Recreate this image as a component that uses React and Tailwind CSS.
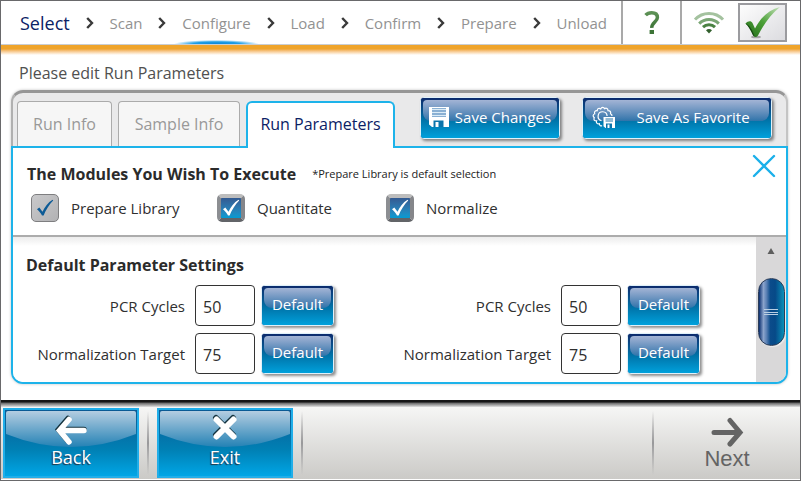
import React from "react";

const steps = [
  { name: "Select", look: "text-[18px] text-[#0b2265]" },
  { name: "Scan", look: "text-[15px] text-[#929292]" },
  { name: "Configure", look: "text-[15px] text-[#929292]", current: true },
  { name: "Load", look: "text-[15px] text-[#929292]" },
  { name: "Confirm", look: "text-[15px] text-[#929292]" },
  { name: "Prepare", look: "text-[15px] text-[#929292]" },
  { name: "Unload", look: "text-[15px] text-[#929292]" },
];

function Chevron() {
  return (
    <svg width="8" height="12" viewBox="0 0 8 12" fill="none" stroke="#3a3a3a" strokeWidth="2.4" aria-hidden="true">
      <path d="M1.2 1l4.8 5-4.8 5" />
    </svg>
  );
}

function Header() {
  return (
    <header>
      <div className="flex h-11 border-b border-[#c9ced4]">
        <nav className="flex-1">
          <ol className="flex h-full items-center justify-between pl-[19px] pr-3.5">
            {steps.map((step, i) => (
              <React.Fragment key={step.name}>
                {i > 0 && (
                  <li aria-hidden="true">
                    <Chevron />
                  </li>
                )}
                <li className="relative flex h-full items-center pt-0.5">
                  <a href="#" aria-current={step.current ? "step" : undefined} className={step.look}>
                    {step.name}
                  </a>
                  {step.current && (
                    <span className="absolute -inset-x-2 bottom-0 h-1 bg-[radial-gradient(50%_100%_at_bottom,#0c86d6_0%,#1f9fe6_55%,transparent_100%)]" />
                  )}
                </li>
              </React.Fragment>
            ))}
          </ol>
        </nav>
        <button type="button" aria-label="Help" className="flex w-[59px] items-center justify-center border-l-2 border-[#a9a9a9]">
          <svg width="16" height="24" viewBox="0 0 16 24" fill="none" aria-hidden="true">
            <defs>
              <linearGradient id="help" x1="0" y1="0" x2="0" y2="1">
                <stop offset="0" stopColor="#5d9155" />
                <stop offset="1" stopColor="#3d7437" />
              </linearGradient>
            </defs>
            <path d="M1.6 4.2C3.400 2.200 5.400 1.800 7.700 1.800c3.500 0 5.700 1.800 5.700 4.700 0 4.400-5.800 5-5.600 10.400" stroke="url(#help)" strokeWidth="3.500" />
            <rect x="5.600" y="19" width="4.400" height="4" fill="#3d7437" />
          </svg>
        </button>
        <div className="flex w-[120px] items-center border-l-2 border-[#a9a9a9] pl-3">
          <svg width="30" height="22" viewBox="0 0 30 22" fill="none" role="img" aria-label="Wireless signal">
            <path d="M1 7.600C8.500-0.500 21.500-0.500 29 7.600" stroke="#a4c29f" strokeWidth="3" />
            <path d="M5.200 11.600c5.400-5.500 14.200-5.500 19.600 0" stroke="#7aa674" strokeWidth="3" />
            <path d="M9 15.200c3.300-3.200 8.700-3.200 12 0" stroke="#4a8243" strokeWidth="3" />
            <path d="M12 18.200c1.700-1.500 4.300-1.500 6 0l-3 3.400z" fill="#315f2c" />
          </svg>
          <button
            type="button"
            aria-label="Status OK"
            className="ml-3.5 flex h-[39px] w-[49px] items-center justify-center border-2 border-[#9b9b9f] bg-linear-to-br from-[#fdfdfd] to-[#dcdce0]"
          >
            <svg width="37" height="33" viewBox="0 0 37 33" aria-hidden="true">
              <defs>
                <linearGradient id="tick" x1="0" y1="1" x2="1" y2="0">
                  <stop offset="0" stopColor="#236b18" />
                  <stop offset=".5" stopColor="#4ba038" />
                  <stop offset="1" stopColor="#c3e0b8" />
                </linearGradient>
              </defs>
              <ellipse cx="12" cy="31" rx="5" ry="1.300" fill="#777" opacity=".6" />
              <path d="M1.500 17.500C4 15 7 14.500 8.500 17l2.500 5.500C16 12.500 24 4 36 1 27 8 19.500 18.500 14 29.500c-1.500 2-3.500 2-4.500 0C7 24 5 20 1.500 17.500z" fill="url(#tick)" />
              <path d="M1.500 17.500C5 18.500 8 23 10.500 30c-1 0-1.500-.5-2-1.500C6.500 24 4.500 20.500 1.500 17.500z" fill="#174a12" />
            </svg>
          </button>
        </div>
      </div>
      <div className="h-2.5 bg-linear-to-b from-[#efa42b] from-40% to-white" />
    </header>
  );
}

function BlueButton({ children, className }) {
  return (
    <button
      type="button"
      className={
        "rounded-sm border border-[#dff1fa] bg-[#0c2a6c] text-white shadow-[2px_2px_3px_rgba(0,0,0,0.45)] " + className
      }
    >
      {children}
    </button>
  );
}

function GlossyFace({ children }) {
  return (
    <span className="grid h-full w-full rounded-xs bg-linear-to-b from-[#0c2a6c] via-[#0073a8] via-55% to-[#00a1dc] px-px pt-0.5">
      <span className="[grid-area:1/1] mx-px h-[54%] rounded-t-sm rounded-b-lg bg-linear-to-b from-[#a3b4d5] to-[#2e74aa]" />
      <span className="[grid-area:1/1] z-10 flex items-center justify-center pb-1">{children}</span>
    </span>
  );
}

function FloppyIcon() {
  return (
    <svg width="20" height="20" viewBox="0 0 20 20" aria-hidden="true">
      <path d="M0 0h20v20H3l-3-2.500z" fill="#fff" />
      <rect x="3" y="1" width="14" height="9" fill="#6f9dc7" />
      <path d="M3 2.500h14M3 5.500h14M3 8.500h14" stroke="#dcecf7" strokeWidth="1.300" />
      <path d="M4.500 13.500h10V20h-10z" fill="#0b74ab" />
      <path d="M6.500 15h3v5h-3z" fill="#fff" />
    </svg>
  );
}

function GearFloppyIcon() {
  return (
    <svg width="24" height="24" viewBox="0 0 24 24" fill="none" aria-hidden="true">
      <path
        d="M10 20.500c-1 .8-2.500.2-2.600-1.800-1.800.7-3.600-.6-2.800-2.800C2.500 16 1.200 14.500 2.300 12.700.6 11.400.8 9.500 2.700 8.800 2 6.800 3.200 5.400 5.200 5.700 5.300 3.600 7 2.700 8.700 3.900 9.600 2 11.600 1.800 12.600 3.600c1.900-1 3.500.1 3.400 2.100 2-.2 3.200 1.300 2.500 3.100 1 .4 1.600 1.200 1.500 2.200"
        stroke="#fff"
        strokeWidth="1.200"
      />
      <path d="M9.500 15.600a4.500 4.500 0 1 1 5.600-4.600" stroke="#fff" strokeWidth="1.200" />
      <path d="M11.500 12H23v11H13.500l-2-1.700z" fill="#fff" />
      <path d="M13.500 14h7.500M13.500 16h7.500" stroke="#2878aa" strokeWidth="1" />
      <path d="M14 18.500h6V23h-6z" fill="#0b74ab" />
      <path d="M15.500 19.500h2V23h-2z" fill="#fff" />
    </svg>
  );
}

function CheckOption({ id, label, muted, className }) {
  const boxLook = muted
    ? "bg-linear-to-br from-[#c9c9cb] to-[#b2b2b4] border border-[#7e7e80]"
    : "bg-linear-to-b from-[#335a91] to-[#009bd2] border-4 border-t-[#bdbdbd] border-r-[#85868a] border-b-[#626468] border-l-[#8c8e92]";
  return (
    <div className={"flex items-center " + className}>
      <span className="grid size-7 place-items-center">
        <input id={id} type="checkbox" defaultChecked className={"peer [grid-area:1/1] size-7 appearance-none rounded-[5px] " + boxLook} />
        <svg
          className="pointer-events-none invisible [grid-area:1/1] peer-checked:visible"
          width="18"
          height="18"
          viewBox="0 0 18 18"
          aria-hidden="true"
        >
          <path d="M1 10.200l2.300-1.700 3.200 4.200C8.800 8 12 3.500 16.600.8l.6.8C13 6 10 10.600 7.600 16.500H6C4.800 14 3.200 12 1 10.200z" fill={muted ? "#0d5b96" : "#fff"} />
        </svg>
      </span>
      <label htmlFor={id} className="ml-3 text-[15px] text-[#2f2f2f]">
        {label}
      </label>
    </div>
  );
}

function ParameterColumn({ side }) {
  const rows = [
    { name: "PCR Cycles", value: "50" },
    { name: "Normalization Target", value: "75" },
  ];
  return (
    <div className="grid grid-cols-[1fr_60px_73px] items-center gap-x-1.5 gap-y-[7px]">
      {rows.map((row) => {
        const id = side + "-" + row.name.toLowerCase().replace(" ", "-");
        return (
          <React.Fragment key={row.name}>
            <label htmlFor={id} className="pr-1 pt-0.5 text-right text-[15px] whitespace-nowrap text-[#2f2f2f]">
              {row.name}
            </label>
            <input id={id} type="text" defaultValue={row.value} className="h-[41px] w-full rounded-sm border border-[#333] bg-white px-[7px] pt-0.5 text-[16px] text-[#2f2f2f]" />
            <BlueButton className="h-[41px] w-full text-[15px]">
              <GlossyFace>Default</GlossyFace>
            </BlueButton>
          </React.Fragment>
        );
      })}
    </div>
  );
}

function Divider() {
  return <div className="h-16 w-0.5 bg-linear-to-b from-transparent via-[#98989a] to-transparent" />;
}

function FooterButton({ label, children }) {
  return (
    <button
      type="button"
      className="grid h-[70px] w-[136px] overflow-hidden border-2 border-[#20aee9] bg-linear-to-b from-[#0a5a94] via-[#0080b4] via-60% to-[#00a6e6] text-white"
    >
      <svg className="[grid-area:1/1] h-[38px] w-full" viewBox="0 0 132 38" preserveAspectRatio="none" aria-hidden="true">
        <defs>
          <linearGradient id={"shine-" + label} x1="0" y1="0" x2="0" y2="1">
            <stop offset="0" stopColor="#b4cde1" />
            <stop offset="1" stopColor="#2482b5" />
          </linearGradient>
        </defs>
        <path d="M1 3q0-2 2-2h126q2 0 2 2v21Q66 50 1 24z" fill={"url(#shine-" + label + ")"} />
      </svg>
      <span className="z-10 flex flex-col items-center pt-1 [grid-area:1/1]">
        {children}
        <span className="text-[18px] leading-6 [text-shadow:-1px_1px_1px_#234]">{label}</span>
      </span>
    </button>
  );
}

function Footer() {
  return (
    <footer className="mt-auto">
      <div className="h-[7px] bg-linear-to-b from-[#161616] from-25% via-[#777] to-[#e2e2e2]" />
      <div className="flex h-[72px] items-center bg-linear-to-b from-[#f6f6f5] to-[#cbcac7] pl-0.5">
        <FooterButton label="Back">
          <svg width="34" height="31" viewBox="0 0 34 31" fill="none" strokeLinecap="round" strokeWidth="5.500" aria-hidden="true">
            <path d="M14 4.500L4.500 15.500 14 27M5 15.500h25" stroke="#15333f" />
            <path d="M15 5.500L5.500 16.500 15 28M6 16.500h24" stroke="#fff" />
          </svg>
        </FooterButton>
        <div className="ml-2">
          <Divider />
        </div>
        <div className="ml-2">
          <FooterButton label="Exit">
            <svg width="28" height="31" viewBox="0 0 28 31" fill="none" strokeLinecap="round" strokeWidth="6" aria-hidden="true">
              <path d="M5 4l17 17M22 4L5 21" stroke="#15333f" />
              <path d="M5.500 5.500l17 17M22.500 5.500l-17 17" stroke="#fff" />
            </svg>
          </FooterButton>
        </div>
        <div className="ml-2">
          <Divider />
        </div>
        <div className="ml-auto">
          <Divider />
        </div>
        <button type="button" className="flex h-[70px] w-[146px] flex-col items-center pt-2 text-[#646464]">
          <svg width="34" height="31" viewBox="0 0 34 31" fill="none" stroke="#646464" strokeLinecap="round" strokeWidth="5" aria-hidden="true">
            <path d="M20 4.500L30 16.500 20 28M4 16.500h25" />
          </svg>
          <span className="font-['Liberation_Sans',Arial,sans-serif] text-[22px] leading-6">Next</span>
        </button>
      </div>
      <div className="h-px bg-white" />
    </footer>
  );
}

export default function App() {
  return (
    <div className="flex min-h-screen flex-col border border-[#69696b] bg-white font-['Open_Sans','Noto_Sans',sans-serif]">
      <Header />
      <main className="pr-3 pb-4 pl-2.5">
        <h1 className="flex h-[35px] items-center pl-2 text-[16px] text-[#505050]">Please edit Run Parameters</h1>
        <section className="rounded-xl bg-[#e9e9ea] shadow-[0_0_3px_rgba(0,0,0,0.25)]">
          <div className="flex items-end justify-between rounded-t-xl border-t-[3px] border-r-2 border-l-2 border-t-[#969696] border-r-[#c4c4c4] border-l-[#b0b0b0] pt-2 pl-1">
            <div role="tablist" className="flex items-end gap-1.5 text-[16px]">
              <button type="button" role="tab" aria-selected="false" className="h-[45px] w-[95px] rounded-t-sm border border-b-0 border-[#ababab] bg-[#f6f6f6] text-[#999]">
                Run Info
              </button>
              <button type="button" role="tab" aria-selected="false" className="h-[45px] w-[122px] rounded-t-sm border border-b-0 border-[#ababab] bg-[#f6f6f6] text-[#999]">
                Sample Info
              </button>
              <button type="button" role="tab" aria-selected="true" className="z-10 -mb-0.5 h-[47px] w-[149px] rounded-t-md border-2 border-b-0 border-[#1db3ea] bg-white pb-1 text-[#0b2265]">
                Run Parameters
              </button>
            </div>
            <div className="-mt-1 mr-3.5 flex gap-[22px] self-start text-[15px]">
              <BlueButton className="h-[42px] w-[140px]">
                <GlossyFace>
                  <span className="flex items-center gap-1.5 whitespace-nowrap">
                    <FloppyIcon />
                    Save Changes
                  </span>
                </GlossyFace>
              </BlueButton>
              <BlueButton className="h-[42px] w-[190px]">
                <GlossyFace>
                  <span className="flex w-full items-center pl-2">
                    <GearFloppyIcon />
                    <span className="flex-1">Save As Favorite</span>
                  </span>
                </GlossyFace>
              </BlueButton>
            </div>
          </div>
          <div className="overflow-hidden rounded-b-xl border-2 border-[#1db3ea] bg-white">
            <div className="h-[87px] px-3.5 pt-1.5">
              <div className="flex items-start">
                <h2 className="pt-1.5 text-[16px] leading-7 font-bold text-[#2b2b2b]">The Modules You Wish To Execute</h2>
                <p className="ml-4 pt-1.5 text-[11px] leading-7 text-[#222]">*Prepare Library is default selection</p>
                <button type="button" aria-label="Close" className="-mr-1 ml-auto">
                  <svg width="24" height="24" viewBox="0 0 24 24" stroke="#1bb0ea" strokeWidth="2.400" strokeLinecap="round" aria-hidden="true">
                    <path d="M2 2l20 20M22 2L2 22" />
                  </svg>
                </button>
              </div>
              <div className="flex items-center pt-1.5 pl-1">
                <CheckOption id="prepare-library" label="Prepare Library" muted className="w-[186px]" />
                <CheckOption id="quantitate" label="Quantitate" className="w-[169px]" />
                <CheckOption id="normalize" label="Normalize" className="" />
              </div>
            </div>
            <div className="flex h-[147px] border-t-2 border-[#acacac]">
              <div className="flex-1 bg-linear-to-b from-[#ececec] to-white to-[9px] pl-[13px]">
                <h2 className="pt-3.5 pb-1.5 text-[16px] leading-7 font-bold text-[#2b2b2b]">Default Parameter Settings</h2>
                <div className="grid grid-cols-2 gap-x-[58px] pr-14">
                  <ParameterColumn side="left" />
                  <ParameterColumn side="right" />
                </div>
              </div>
              <div className="flex w-[30px] flex-col items-center bg-[#d9d8d9]">
                <button type="button" aria-label="Scroll up" className="flex h-[41px] items-start pt-[11px]">
                  <svg width="8" height="6" viewBox="0 0 8 6" aria-hidden="true">
                    <path d="M4 0l3.500 6h-7z" fill="#5e5e5e" />
                  </svg>
                </button>
                <div
                  role="scrollbar"
                  aria-label="Settings"
                  aria-valuenow="25"
                  className="flex h-[68px] w-[27px] items-center justify-center rounded-full border border-[#2a3c58] bg-[linear-gradient(90deg,#0a2f70_0%,#8aa3cb_18%,#5a80b4_30%,#0b4c8b_45%,#064a88_65%,#0a8fb8_100%)] shadow-[1px_1px_1px_#eee]"
                >
                  <svg width="14" height="8" viewBox="0 0 14 8" stroke="#b9cfe3" strokeWidth="1" aria-hidden="true">
                    <path d="M0 1.500h14M0 4.500h14M0 6.500h14" />
                  </svg>
                </div>
              </div>
            </div>
          </div>
        </section>
      </main>
      <Footer />
    </div>
  );
}
